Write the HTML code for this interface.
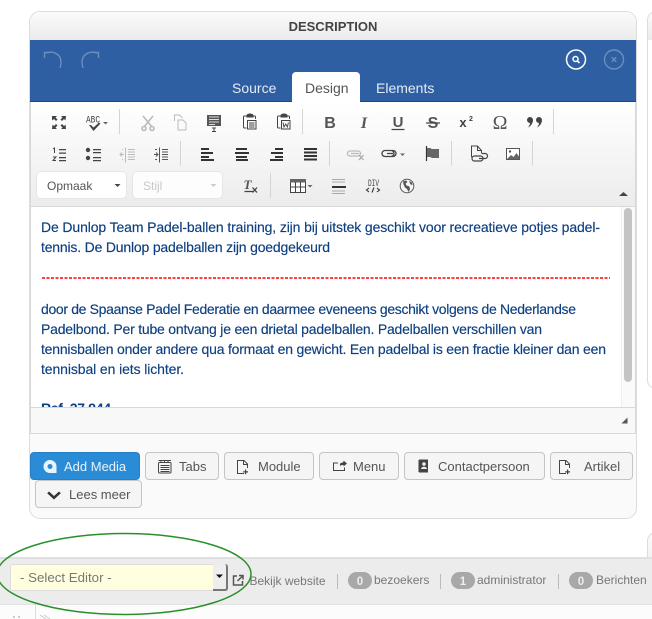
<!DOCTYPE html>
<html><head><meta charset="utf-8"><style>
html,body{margin:0;padding:0;width:652px;height:619px;overflow:hidden;background:#fff;font-family:"Liberation Sans",sans-serif}
div{position:absolute;box-sizing:border-box}
svg{position:absolute;left:0;top:0}
svg text{font-family:"Liberation Sans",sans-serif}
</style></head><body>
<div style="left:29px;top:11px;width:608px;height:508px;border:1px solid #ddd;border-radius:11px;background:#fafafa"></div>
<div style="left:30px;top:12px;width:606px;height:28px;border-radius:10px 10px 0 0;background:linear-gradient(#fbfbfb,#ebebeb)"></div>
<div style="left:30px;top:40px;width:606px;height:62px;background:#2f5fa3;border-bottom:1px solid #1f4577"></div>
<div style="left:292px;top:72px;width:68px;height:30px;background:#fff;border-radius:4px 4px 0 0"></div>
<div style="left:30px;top:102px;width:606px;height:104px;background:linear-gradient(#fff,#ececec);border-right:1px solid #d8d8d8;border-left:1px solid #d8d8d8"></div>
<div style="left:30px;top:206px;width:606px;height:228px;border:1px solid #d8d8d8;border-top:1px solid #d8d8d8;background:#fff"></div>
<div style="left:621px;top:207px;width:14px;height:200px;background:#fafafa;border-left:1px solid #eee"></div>
<div style="left:624px;top:208px;width:8px;height:174px;background:#c4c4c4;border-radius:4px"></div>
<div style="left:31px;top:407px;width:604px;height:26px;background:#f8f8f8;border-top:1px solid #d8d8d8"></div>
<div style="left:36px;top:171px;width:91px;height:28px;background:#fff;border:1px solid #e6e6e6;border-radius:5px"></div>
<div style="left:132px;top:171px;width:91px;height:28px;background:#fdfdfd;border:1px solid #e6e6e6;border-radius:5px"></div>
<div style="left:30px;top:452px;width:110px;height:28px;background:#2a8cd6;border:1px solid #2580c6;border-radius:4px"></div>
<div style="left:145px;top:452px;width:74px;height:28px;background:#f5f5f5;border:1px solid #c4c4c4;border-radius:4px"></div>
<div style="left:224px;top:452px;width:90px;height:28px;background:#f5f5f5;border:1px solid #c4c4c4;border-radius:4px"></div>
<div style="left:319px;top:452px;width:80px;height:28px;background:#f5f5f5;border:1px solid #c4c4c4;border-radius:4px"></div>
<div style="left:404px;top:452px;width:141px;height:28px;background:#f5f5f5;border:1px solid #c4c4c4;border-radius:4px"></div>
<div style="left:550px;top:452px;width:83px;height:28px;background:#f5f5f5;border:1px solid #c4c4c4;border-radius:4px"></div>
<div style="left:35px;top:480px;width:107px;height:28px;background:#f5f5f5;border:1px solid #c4c4c4;border-radius:4px"></div>
<div style="left:647px;top:11px;width:20px;height:378px;border:1px solid #ddd;border-radius:9px;background:#fff"></div>
<div style="left:648px;top:12px;width:19px;height:28px;background:linear-gradient(#fbfbfb,#ebebeb);border-radius:9px 0 0 0"></div>
<div style="left:647px;top:532px;width:20px;height:40px;border:1px solid #ddd;border-radius:9px;background:linear-gradient(#fbfbfb,#eee)"></div>
<div style="left:0;top:557px;width:652px;height:48px;background:#ececec;border-top:2px solid #e0e0e0;border-bottom:1px solid #e2e2e2"></div>
<div style="left:0;top:605px;width:652px;height:14px;background:#fcfcfc"></div>
<div style="left:35px;top:605px;width:1px;height:14px;background:#ddd"></div>
<div style="left:10px;top:564px;width:218px;height:27px;background:#ffffe0;border:1px solid #ddd;border-radius:3px 0 0 3px"></div>
<div style="left:213px;top:564px;width:15px;height:27px;background:#eee;border-right:2px solid #777;border-bottom:2px solid #777;border-radius:0 3px 3px 0"></div>
<div style="left:31px;top:207px;width:590px;height:200px;overflow:hidden">
<svg width="590" height="200" style="left:0;top:0"><text x="10" y="206" font-size="14" font-weight="700" fill="#0d3f80" textLength="70" lengthAdjust="spacing">Ref. 27.944</text></svg>
</div>
<svg width="652" height="619" viewBox="0 0 652 619">
<g font-size="14" fill="#0d3f80" stroke="#0d3f80" stroke-width=".15">
<text x="41" y="232" textLength="559" lengthAdjust="spacing">De Dunlop Team Padel-ballen training, zijn bij uitstek geschikt voor recreatieve potjes padel-</text>
<text x="41" y="252" textLength="289" lengthAdjust="spacing">tennis. De Dunlop padelballen zijn goedgekeurd</text>
<text x="41" y="314" textLength="535" lengthAdjust="spacing">door de Spaanse Padel Federatie en daarmee eveneens geschikt volgens de Nederlandse</text>
<text x="41" y="334" textLength="501" lengthAdjust="spacing">Padelbond. Per tube ontvang je een drietal padelballen. Padelballen verschillen van</text>
<text x="41" y="354" textLength="565" lengthAdjust="spacing">tennisballen onder andere qua formaat en gewicht. Een padelbal is een fractie kleiner dan een</text>
<text x="41" y="374" textLength="143" lengthAdjust="spacing">tennisbal en iets lichter.</text>
</g>
<path d="M42 278H610" stroke="#f00" stroke-width="1.500" stroke-dasharray="3 1.500" fill="none"/>

<text x="333" y="31" font-size="13" font-weight="700" fill="#444" text-anchor="middle">DESCRIPTION</text>
<!-- undo / redo -->
<g fill="none" stroke="#6f8dbb" stroke-width="1.400">
<path d="M45 53C54 50 61 55 61 62C61 64 60.500 66 60 68M44.500 58V52.500H50"/>
<path d="M98 53C89 50 82 55 82 62C82 64 82.500 66 83 68M98.500 58V52.500H93"/>
<circle cx="614" cy="59.500" r="9.500"/><path d="M611.800 57.300L616.200 61.700M616.200 57.300L611.800 61.700"/>
</g>
<circle cx="576" cy="59.500" r="9.500" fill="none" stroke="#fff" stroke-width="1.500"/>
<circle cx="575.500" cy="59" r="2.500" fill="none" stroke="#fff" stroke-width="1.500"/><path d="M577.500 61L579.500 63" stroke="#fff" stroke-width="1.600"/>
<g font-size="14"><text x="232" y="93" fill="#e4ebf5">Source</text><text x="305" y="93" fill="#555">Design</text><text x="376" y="93" fill="#e4ebf5">Elements</text></g>

<!-- separators -->
<path d="M119.500 109V134M302.500 109V134M553.500 109V134M180.500 141V166M329.500 141V166M451.500 141V166M532.500 141V166M270.500 173V198" stroke="#d4d4d4" fill="none"/>

<!-- row 1 -->
<g fill="#444">
<path d="M52 116h5l-1.500 1.500 2 2-1.500 1.500-2-2L52 120.500zM66 116h-5l1.500 1.500-2 2 1.500 1.500 2-2 1.500 1.500zM52 129h5l-1.500-1.500 2-2-1.500-1.500-2 2-1.500-1.500zM66 129h-5l1.500-1.500-2-2 1.500-1.500 2 2 1.500-1.500z"/>
<text x="86" y="122.500" font-size="10" style="font-family:'Liberation Mono'" textLength="14" lengthAdjust="spacingAndGlyphs">ABC</text>
<path d="M89 125l2 0 2.500 2.500 5.500-5 1.500 1-7 7.500z"/><path d="M103 122h5l-2.500 2.500z" fill="#666"/>
</g>
<g fill="none" stroke="#bbb" stroke-width="1.600"><path d="M143 116L152 127M153 116L144 127"/><circle cx="144" cy="128.500" r="2"/><circle cx="152" cy="128.500" r="2"/></g>
<path d="M174.500 121v-6h5l3 3M178 120h5l3 3v7h-8z" fill="none" stroke="#bbb"/>
<path d="M207 115h14v11h-14z" fill="#555"/><path d="M209 117h10M209 119.500h10M209 122h10M209 124.500h6" stroke="#ddd"/><path d="M212 128h4M214 128v3.500M212 131.500h4" stroke="#444"/>
<g fill="none" stroke="#444">
<path d="M246.500 116h-2a1 1 0 0 0-1 1v10a1 1 0 0 0 1 1h2M253.500 116h1a1 1 0 0 1 1 1v2"/><path d="M247 117v-1.500c0-1 2-1.500 3-1.500s3 .5 3 1.500v1.500z" fill="#444"/><rect x="247.500" y="120.500" width="8.500" height="8.500" fill="#fafafa"/><path d="M249 123h5.500M249 125h5.500M249 127h5.500"/>
<path d="M280.500 116h-2a1 1 0 0 0-1 1v10a1 1 0 0 0 1 1h2M287.500 116h1a1 1 0 0 1 1 1v2"/><path d="M281 117v-1.500c0-1 2-1.500 3-1.500s3 .5 3 1.500v1.500z" fill="#444"/><rect x="281.500" y="120.500" width="8.500" height="8.500" fill="#fafafa"/><path d="M283 122.500l1 4.500 1.700-3 1.700 3 1-4.500" stroke-width=".9"/>
</g>
<g font-weight="700" fill="#555">
<text x="330" y="128" font-size="16" text-anchor="middle">B</text>
<text x="364" y="128" font-size="16" text-anchor="middle" font-style="italic" style="font-family:'Liberation Serif'">I</text>
<text x="398" y="127" font-size="15" text-anchor="middle">U</text>
<text x="433" y="128" font-size="16" text-anchor="middle">S</text>
<text x="463" y="127" font-size="13" text-anchor="middle" fill="#444">x</text>
<text x="471" y="121" font-size="7" text-anchor="middle" fill="#444">2</text>
<text x="500" y="129" font-size="20" text-anchor="middle" font-weight="400" style="font-family:'Liberation Serif'">Ω</text>
</g>
<path d="M391.500 129.500h13M426 123h14" stroke="#444" stroke-width="1.300" fill="none"/>
<path d="M530 117a3 3 0 0 1 3 3c0 3-2 6-5 7.500 1-1.500 2-3 2-4.500a3 3 0 0 1 0-6zM539 117a3 3 0 0 1 3 3c0 3-2 6-5 7.500 1-1.500 2-3 2-4.500a3 3 0 0 1 0-6z" fill="#444"/>

<!-- row 2 -->
<path d="M53 149l1.500-1v5M53 157h3l-3 3.500h3" stroke="#444" stroke-width="1" fill="none"/>
<path d="M59 149h7v1.200h-7zM59 152.500h7v1.200h-7zM59 157h7v1.200h-7zM59 160h7v1.200h-7z" fill="#444"/>
<circle cx="88" cy="150" r="2.200" fill="#444"/><circle cx="88" cy="158" r="2.200" fill="#444"/><path d="M93 149h8v1.200h-8zM93 152h8v1.200h-8zM93 157h8v1.200h-8zM93 160h8v1.200h-8z" fill="#444"/>
<g stroke="#bbb" fill="none"><path d="M125.500 147.500V162.500M128 149.500h7M128 152h7M128 154.500h7M128 157h7M128 159.500h7"/><path d="M120 154.500h4M122 152.500l-2 2 2 2" /><path d="M122 149.500h1M122 159.500h1"/></g>
<g stroke="#555" fill="none"><path d="M159.500 147.500V162.500M162 149.500h6M162 152h6M162 154.500h6M162 157h6M162 159.500h6"/><path d="M154 154.500h4M156 152.500l2 2-2 2"/><path d="M155 149.500h2M155 159.500h2"/></g>
<path d="M201 148h8v2h-8zM201 152h12v2h-12zM201 156h8v2h-8zM201 159h13v2h-13zM236 148h11v2h-11zM235 152h14v2h-14zM236 156h11v2h-11zM236 159h12v2h-12zM275 148h8v2h-8zM271 152h12v2h-12zM275 156h8v2h-8zM270 159h13v2h-13zM304 148h13v2h-13zM304 151.500h13v2h-13zM304 155h13v2h-13zM304 158.500h13v2h-13z" fill="#333"/>
<g fill="none">
<path d="M350 151h8a2.500 2.500 0 0 1 0 5h-8a2.500 2.500 0 0 1 0-5zM351 153.500h8" stroke="#bbb" stroke-width="1.300"/><path d="M359 155l4.500 5M363.500 155l-4.500 5" stroke="#aaa" stroke-width="1.300"/>
<path d="M385 150.500h6a3 3 0 0 1 0 6h-6a3 3 0 0 1 0-6zM391 150.500h2a3 3 0 0 1 0 6h-2M387 153.500h6" stroke="#444" stroke-width="1.300"/>
<path d="M426.500 146V161" stroke="#333" stroke-width="1.200"/>
<path d="M471.500 157v-11h6l4 4.500v3M477.500 146v4.500h4" stroke="#444"/>
<path d="M474.500 154.500h6a2.500 2.500 0 0 1 0 5h-6a2.500 2.500 0 0 1 0-5zM479 157h6a2.500 2.500 0 0 0 0-5h-3" stroke="#444" stroke-width="1.200" transform="translate(0,1.500)"/>
</g>
<path d="M427 148h3l2 1h7v9h-7l-2-1h-3z" fill="#666"/>
<rect x="506.500" y="148.500" width="13" height="11" fill="#fff" stroke="#555"/><path d="M507 159l4-4 2.500 2 3-4 2.500 3.500V159z" fill="#666"/><circle cx="510" cy="151.500" r="1.200" fill="#555"/>
<path d="M400 153.500h5l-2.500 2.500z" fill="#666"/>

<!-- row 3 -->
<g font-size="12"><text x="47" y="190" fill="#555">Opmaak</text><text x="143" y="190" fill="#c8c8c8">Stijl</text></g>
<path d="M114.500 184h6l-3 3z" fill="#444"/><path d="M210.500 184h6l-3 3z" fill="#ccc"/>
<text x="247.500" y="189" font-size="13" font-weight="700" font-style="italic" fill="#555" text-anchor="middle" style="font-family:'Liberation Serif'">T</text>
<path d="M244.500 191.500h9" stroke="#444" stroke-width="1.300"/><path d="M252.500 187.500l4.500 5M257 187.500l-4.500 5" stroke="#444" stroke-width="1.300"/>
<rect x="290.500" y="179.500" width="15" height="13" fill="#fff" stroke="#444"/><rect x="290" y="179" width="16" height="3.500" fill="#666"/><path d="M295.500 182v10M300.500 182v10M291 187h14" stroke="#444"/><path d="M307.500 185h5l-2.500 2.500z" fill="#666"/>
<path d="M332 179.500h13M332 182h13M332 191h13M332 193.500h13" stroke="#aaa"/><path d="M332 186h14v2h-14z" fill="#333"/>
<text x="368" y="186" font-size="10" fill="#444" textLength="11" lengthAdjust="spacingAndGlyphs" style="font-family:'Liberation Mono'">DIV</text>
<path d="M369 188l-2.500 2 2.500 2M377 188l2.500 2-2.500 2M374 187.500l-2 5" stroke="#333" fill="none" stroke-width="1.100"/>
<circle cx="407" cy="186" r="6.800" fill="#f6f6f6" stroke="#555"/><path d="M403 181.500l3-1 1.500 1.500-2 1.500 1 2 3 1 .5 3-1.500 2.500-1.500-3-2-1.500-1.500-3zM409 181l3 1.500 .5 2.500-2-.5z" fill="#555"/>
<path d="M619 196l4.500-4 4.500 4z" fill="#444"/>
<path d="M627.500 417.500v6h-6z" fill="#555"/>

<!-- buttons -->
<g font-size="13" fill="#555">
<text x="64" y="471" fill="#e8f3fb">Add Media</text>
<text x="179" y="471">Tabs</text>
<text x="258" y="471">Module</text>
<text x="353" y="471">Menu</text>
<text x="438" y="471">Contactpersoon</text>
<text x="584" y="471">Artikel</text>
<text x="69" y="499">Lees meer</text>
</g>
<circle cx="50" cy="466.500" r="6.500" fill="#e8f3fb"/><circle cx="50" cy="466.500" r="2.500" fill="#2a8cd6"/><path d="M50 473h6.500v-6.500z" fill="#e8f3fb"/>
<g fill="none" stroke="#444">
<rect x="158.500" y="462.500" width="12.500" height="10.500" rx="1"/><path d="M158.500 460.500h12.500M161 462.500v-2M164.500 462.500v-2M168 462.500v-2M160.500 465.500h9M160.500 467.500h9M160.500 469.500h9M160.500 471.500h9" stroke-width=".9"/>
<path d="M244 473.500h-6.500v-13h6.500l3.500 3.500v4M243.500 460.500V464.500h4" stroke-width="1"/>
<path d="M338 463h-4.500v7.500h11V467.500"/>
<path d="M566 473.500h-6.500v-13h6.500l3.500 3.500v4M565.500 460.500V464.500h4" stroke-width="1"/>
</g>
<path d="M245 469.500h1.200v1.800h1.800v1.200h-1.800v1.800H245v-1.800h-1.800v-1.200h1.800zM567 469.500h1.200v1.800h1.800v1.200h-1.800v1.800H567v-1.800h-1.800v-1.200h1.800zM340 463.500l3.500-1.500v-1.500l3.500 3-3.500 3V465c-1.500 0-3 0-3.500 1.500z" fill="#444"/>
<path d="M419 459.500h9v13h-9z" fill="#444"/><path d="M418 460h1v12h-1z" fill="#999"/><circle cx="424" cy="464" r="1.800" fill="#eee"/><path d="M421 469c0-3 6-3 6 0z" fill="#eee"/>
<path d="M49 491.500l5 4.500 5-4.500 1.800 1.800L54 499.500l-6.800-6.200z" fill="#333"/>

<!-- footer -->
<path d="M216 574.500h7l-3.500 3.500z" fill="#111"/>
<text x="20" y="582" font-size="13.300" fill="#777">- Select Editor -</text>
<path d="M237 576h-3.500v9h9v-4" fill="none" stroke="#555" stroke-width="1.500"/><path d="M237.500 581l5-5M239 575.500h4v4" fill="none" stroke="#555" stroke-width="1.500"/>
<g font-size="12" fill="#777">
<text x="249.500" y="585">Bekijk website</text>
<text x="374" y="584">bezoekers</text>
<text x="477" y="584">administrator</text>
<text x="596" y="584">Berichten</text>
</g>
<path d="M337.500 574v15M440.500 574v15M558.500 574v15" stroke="#bbb"/>
<rect x="348" y="572" width="24" height="17" rx="8.500" fill="#a8a8a8"/><rect x="451" y="572" width="24" height="17" rx="8.500" fill="#a8a8a8"/><rect x="569" y="572" width="24" height="17" rx="8.500" fill="#a8a8a8"/>
<g font-size="11.500" font-weight="700" fill="#eee" text-anchor="middle"><text x="360" y="585">0</text><text x="463" y="585">1</text><text x="581" y="585">0</text></g>
<path d="M40 615l6 4M44 615l6 4" stroke="#ccc" fill="none"/><path d="M13 617h2M18 617h2" stroke="#999"/>
<ellipse cx="124" cy="574" rx="127" ry="40.500" fill="none" stroke="#2a8f2a" stroke-width="1.500"/>
</svg>
</body></html>
